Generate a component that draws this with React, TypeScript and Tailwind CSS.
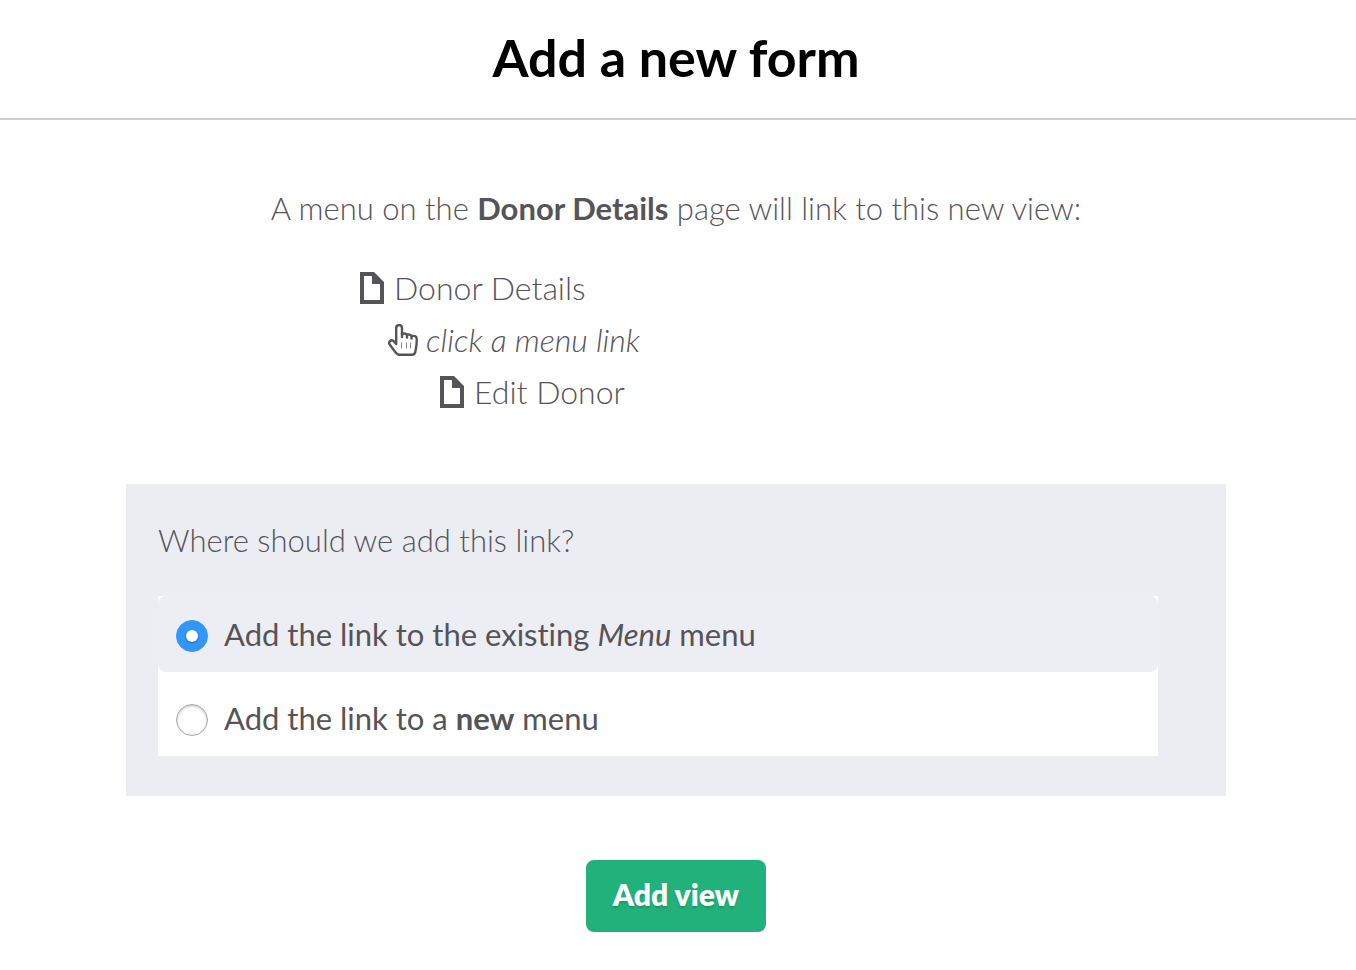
import { useState } from 'react';

function PageIcon() {
  return (
    <svg viewBox="0 0 24 32" className="h-8 w-6 shrink-0" fill="currentColor" aria-hidden="true">
      <path fillRule="evenodd" d="M0 0h14l10 10v22H0V0Zm4 4v24h16V12h-8V4H4Z" />
    </svg>
  );
}

function PointerIcon() {
  return (
    <svg
      viewBox="0 0 30 32"
      className="h-8 w-[30px] shrink-0"
      fill="none"
      stroke="currentColor"
      strokeWidth="2.4"
      strokeLinecap="round"
      strokeLinejoin="round"
      aria-hidden="true"
    >
      <path d="M8.200 20V4a2.900 2.900 0 0 1 5.800 0v6.200c2-1.300 4-.8 5 .8 1.700-.9 3.700-.4 4.500 1.200 2.500-.9 5.300 0 5.300 2.800 0 5.500-.3 7.800-1.500 13-.5 2.100-1.300 2.700-3.300 2.700H11.500c-1.700 0-2.700-.5-3.700-2L1.700 20.500c-1.700-2.600 1.100-5.300 3.500-3.700L8.200 20Z" />
      <path d="M14 9v4M19 11v2.500M23.500 12.200v2.300" />
      <path d="M13.500 18.500v6M18.500 18.500v6M22.500 18.500v6" strokeWidth="1" strokeLinecap="butt" opacity="0.7" />
    </svg>
  );
}

const radioClass =
  "relative mt-1 h-8 w-8 shrink-0 appearance-none rounded-full border border-[#a8a8a8] bg-white shadow-[inset_0_1px_3px_rgba(0,0,0,0.25)] checked:border-[#3296ff] checked:bg-[#3296ff] checked:shadow-none checked:before:absolute checked:before:inset-[9px] checked:before:rounded-full checked:before:bg-white checked:before:shadow-[0_1px_2px_rgba(0,0,0,0.35)] checked:before:content-['']";

export default function App() {
  const [target, setTarget] = useState('existing');

  return (
    <div className="bg-white font-['Lato',sans-serif] text-[31px] leading-[52px] font-light text-[#555459] [font-variant-ligatures:none]">
      <header className="border-b-2 border-[#cccccc] pt-6 pr-1 pb-7">
        <h1 className="text-center text-[52px] leading-[66px] font-bold text-black">Add a new form</h1>
      </header>

      <main className="mx-auto max-w-[1104px] pt-[62px] pr-1">
        <p className="text-center">
          A menu on the <strong className="font-bold">Donor Details</strong> page will link to this new view:
        </p>

        {/* Path from the parent page to the new one */}
        <ul className="pt-7 pl-[234px] text-[32px]">
          <li className="flex items-center gap-[10px]">
            <PageIcon />
            <span>Donor Details</span>
          </li>
          <li className="flex items-center gap-2 pl-7">
            <PointerIcon />
            <em>click a menu link</em>
          </li>
          <li className="flex items-center gap-[10px] pl-20">
            <PageIcon />
            <span>Edit Donor</span>
          </li>
        </ul>

        <form onSubmit={(e) => e.preventDefault()}>
          <fieldset className="mt-[66px] bg-[#ecedf3] pt-[30px] pr-[68px] pb-10 pl-8">
            <legend className="float-left mb-[30px] w-full">Where should we add this link?</legend>
            <div className="clear-both flex flex-col gap-2 bg-white font-normal">
              <label
                className={`flex h-[76px] items-center gap-4 rounded-lg px-[18px] ${target === 'existing' ? 'bg-[#edeef4]' : ''}`}
              >
                <input
                  type="radio"
                  name="target"
                  className={radioClass}
                  checked={target === 'existing'}
                  onChange={() => setTarget('existing')}
                />
                <span>
                  Add the link to the existing <em>Menu</em> menu
                </span>
              </label>
              <label
                className={`flex h-[76px] items-center gap-4 rounded-lg px-[18px] ${target === 'new' ? 'bg-[#edeef4]' : ''}`}
              >
                <input
                  type="radio"
                  name="target"
                  className={radioClass}
                  checked={target === 'new'}
                  onChange={() => setTarget('new')}
                />
                <span>
                  Add the link to a <strong className="font-bold">new</strong> menu
                </span>
              </label>
            </div>
          </fieldset>

          <div className="flex justify-center pt-16 pb-10">
            <button
              type="submit"
              className="h-[72px] w-[180px] rounded-lg bg-[#20b27a] pb-1 text-[30px] font-extrabold text-white [text-shadow:0_2px_2px_rgba(0,0,0,0.15)]"
            >
              Add view
            </button>
          </div>
        </form>
      </main>
    </div>
  );
}
